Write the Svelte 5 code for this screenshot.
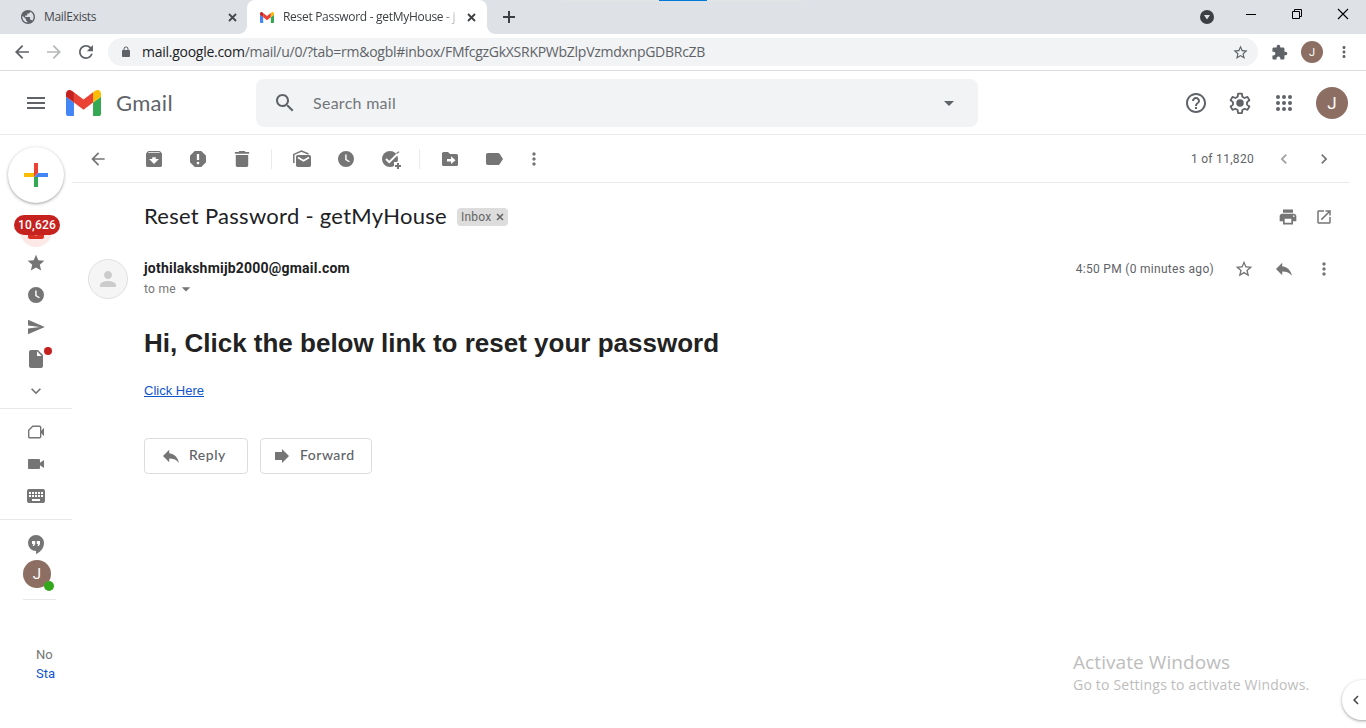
<script>
  const P = {
    back: 'M20 11H7.83l5.59-5.59L12 4l-8 8 8 8 1.41-1.41L7.83 13H20v-2z',
    forward: 'M12 4l-1.41 1.41L16.17 11H4v2h12.17l-5.58 5.59L12 20l8-8z',
    refresh: 'M17.65 6.35C16.2 4.9 14.21 4 12 4c-4.42 0-7.99 3.58-7.99 8s3.57 8 7.99 8c3.73 0 6.84-2.55 7.73-6h-2.08c-.82 2.33-3.04 4-5.65 4-3.31 0-6-2.69-6-6s2.69-6 6-6c1.66 0 3.14.69 4.22 1.78L13 11h7V4l-2.35 2.35z',
    lock: 'M18 8h-1V6c0-2.76-2.24-5-5-5S7 3.24 7 6v2H6c-1.1 0-2 .9-2 2v10c0 1.1.9 2 2 2h12c1.1 0 2-.9 2-2V10c0-1.1-.9-2-2-2zM9 8V6c0-1.66 1.34-3 3-3s3 1.34 3 3v2H9z',
    globe: 'M12 2C6.48 2 2 6.48 2 12s4.48 10 10 10 10-4.48 10-10S17.52 2 12 2zm-1 17.93c-3.95-.49-7-3.85-7-7.93 0-.62.08-1.21.21-1.79L9 15v1c0 1.1.9 2 2 2v1.93zm6.9-2.54c-.26-.81-1-1.39-1.9-1.39h-1v-3c0-.55-.45-1-1-1H8v-2h2c.55 0 1-.45 1-1V7h2c1.1 0 2-.9 2-2v-.41c2.93 1.19 5 4.06 5 7.41 0 2.08-.8 3.97-2.1 5.39z',
    starBorder: 'M22 9.24l-7.19-.62L12 2 9.19 8.63 2 9.24l5.46 4.73L5.82 21 12 17.27 18.18 21l-1.63-7.03L22 9.24zM12 15.4l-3.76 2.27 1-4.28-3.32-2.88 4.38-.38L12 6.1l1.71 4.04 4.38.38-3.32 2.88 1 4.28L12 15.4z',
    star: 'M12 17.27L18.18 21l-1.64-7.03L22 9.24l-7.19-.61L12 2 9.19 8.63 2 9.24l5.46 4.73L5.82 21z',
    puzzle: 'M20.5 11H19V7c0-1.1-.9-2-2-2h-4V3.5C13 2.12 11.88 1 10.5 1S8 2.12 8 3.5V5H4c-1.1 0-1.99.9-1.99 2v3.8H3.5c1.49 0 2.7 1.21 2.7 2.7s-1.21 2.7-2.7 2.7H2V20c0 1.1.9 2 2 2h3.8v-1.5c0-1.49 1.21-2.7 2.7-2.7 1.49 0 2.7 1.21 2.7 2.7V22H17c1.1 0 2-.9 2-2v-4h1.5c1.38 0 2.5-1.12 2.5-2.5S21.88 11 20.5 11z',
    search: 'M15.5 14h-.79l-.28-.27C15.41 12.59 16 11.11 16 9.5 16 5.91 13.09 3 9.5 3S3 5.91 3 9.5 5.91 16 9.5 16c1.61 0 3.09-.59 4.23-1.57l.27.28v.79l5 4.99L20.49 19l-4.99-5zm-6 0C7.01 14 5 11.99 5 9.5S7.01 5 9.5 5 14 7.01 14 9.5 11.99 14 9.5 14z',
    menu: 'M3 18h18v-2H3v2zm0-5h18v-2H3v2zm0-7v2h18V6H3z',
    help: 'M11 18h2v-2h-2v2zm1-16C6.48 2 2 6.48 2 12s4.48 10 10 10 10-4.48 10-10S17.52 2 12 2zm0 18c-4.41 0-8-3.59-8-8s3.59-8 8-8 8 3.59 8 8-3.59 8-8 8zm0-14c-2.21 0-4 1.79-4 4h2c0-1.1.9-2 2-2s2 .9 2 2c0 2-3 1.75-3 5h2c0-2.25 3-2.5 3-5 0-2.21-1.79-4-4-4z',
    archive: 'M20.54 5.23l-1.39-1.68C18.88 3.21 18.47 3 18 3H6c-.47 0-.88.21-1.16.55L3.46 5.23C3.17 5.57 3 6.02 3 6.5V19c0 1.1.9 2 2 2h14c1.1 0 2-.9 2-2V6.5c0-.48-.17-.93-.46-1.27zM12 17.5L6.5 12H10v-2h4v2h3.5L12 17.5zM5.12 5l.81-1h12l.94 1H5.12z',
    report: 'M15.73 3H8.27L3 8.27v7.46L8.27 21h7.46L21 15.73V8.27L15.73 3zM12 17.8c-.8 0-1.5-.6-1.5-1.4 0-.8.7-1.4 1.5-1.4s1.5.6 1.5 1.4c0 .8-.7 1.4-1.5 1.4zM13.3 13h-2.6V6.5h2.6V13z',
    trash: 'M5 19c0 1.1.9 2 2 2h10c1.1 0 2-.9 2-2V7.5H5V19zM20 4h-4l-1-1H9L8 4H4v2.2h16V4z',
    clock: 'M12 2a10 10 0 1 0 0 20a10 10 0 0 0 0-20zM15.8 16.2L11 13.2V6.5h1.8v5.7l4 2.5z',
    send: 'M2.01 21L23 12 2.01 3 2 10l15 2-15 2z',
    reply: 'M10 9V5l-7 7 7 7v-4.1c5 0 8.5 1.6 11 5.1-1-5-4-10-11-11z',
    print: 'M19 8H5c-1.66 0-3 1.34-3 3v6h4v4h12v-4h4v-6c0-1.66-1.34-3-3-3zm-3 11H8v-5h8v5zm3-7c-.55 0-1-.45-1-1s.45-1 1-1 1 .45 1 1-.45 1-1 1zm-1-9H6v4h12V3z',
    open: 'M19 19H5V5h7V3H5c-1.11 0-2 .9-2 2v14c0 1.1.89 2 2 2h14c1.1 0 2-.9 2-2v-7h-2v7zM14 3v2h3.59l-9.83 9.83 1.41 1.41L19 6.41V10h2V3h-7z',
    dots: 'M12 8c1.1 0 2-.9 2-2s-.9-2-2-2-2 .9-2 2 .9 2 2 2zm0 2c-1.1 0-2 .9-2 2s.9 2 2 2 2-.9 2-2-.9-2-2-2zm0 6c-1.1 0-2 .9-2 2s.9 2 2 2 2-.9 2-2-.9-2-2-2z',
    caret: 'M7 10l5 5 5-5z',
    left: 'M15.41 7.41L14 6l-6 6 6 6 1.41-1.41L10.83 12z',
    right: 'M10 6L8.59 7.41 13.17 12l-4.58 4.59L10 18l6-6z',
    down: 'M16.59 8.59L12 13.17 7.41 8.59 6 10l6 6 6-6z',
    person: 'M12 12c2.21 0 4-1.79 4-4s-1.79-4-4-4-4 1.79-4 4 1.79 4 4 4zm0 2c-2.67 0-8 1.34-8 4v2h16v-2c0-2.66-5.33-4-8-4z',
    close: 'M19 6.41L17.59 5 12 10.59 6.410 5 5 6.410 10.590 12 5 17.590 6.410 19 12 13.410 17.590 19 19 17.590 13.410 12z'
  };
  const grid = [2, 8, 14];
</script>

{#snippet icon(name, size = 20, ext = 24)}
  <svg class="i" width={size} height={size} viewBox="{12 - ext / 2} {12 - ext / 2} {ext} {ext}" fill="currentColor"><path d={P[name]} /></svg>
{/snippet}

{#snippet cross(size, weight)}
  <svg class="i" width={size} height={size} viewBox="0 0 {size} {size}"><path d="M1 1L{size - 1} {size - 1}M{size - 1} 1L1 {size - 1}" stroke="currentColor" stroke-width={weight} /></svg>
{/snippet}

{#snippet gmail(w, h)}
  <svg class="i" width={w} height={h} viewBox="52 42 88 66" preserveAspectRatio="none">
    <path fill="#4285f4" d="M58 108h14V74L52 59v43c0 3.320 2.690 6 6 6" />
    <path fill="#34a853" d="M120 108h14c3.320 0 6-2.690 6-6V59l-20 15" />
    <path fill="#fbbc04" d="M120 48v26l20-15v-8c0-7.420-8.470-11.650-14.400-7.200" />
    <path fill="#ea4335" d="M72 74V48l24 18 24-18v26L96 92" />
    <path fill="#c5221f" d="M52 51v8l20 15V48l-5.600-4.200c-5.940-4.450-14.400-.22-14.400 7.200" />
  </svg>
{/snippet}

<div class="page">
  <div class="tabs">
    <div class="tab first">
      <span class="fav"><svg class="i" width="14" height="14" viewBox="2 2 20 20" fill="currentColor"><path d={P.globe} /></svg></span>
      <span class="name n1">MailExists</span>
      <span class="x">{@render cross(9, 1.8)}</span>
    </div>
    <div class="tab active">
      <span class="fav">{@render gmail(14, 11)}</span>
      <span class="name n2">Reset Password - getMyHouse - j</span>
      <span class="x">{@render cross(9, 1.8)}</span>
    </div>
    <div class="plus"><svg class="i" width="12" height="12" viewBox="0 0 12 12"><path d="M6 0v12M0 6h12" stroke="#3c4043" stroke-width="2" /></svg></div>
    <div class="hint"><i></i></div>
    <div class="winctl">
      <svg class="i drop" width="14" height="14" viewBox="0 0 14 14"><circle cx="7" cy="7" r="7" fill="#3c4043" /><path d="M4 5h6L7 9.500z" fill="#dee1e6" /></svg>
      <svg class="i" width="46" height="28" viewBox="0 0 46 28"><path d="M18 14.500h10" stroke="#000" /></svg>
      <svg class="i" width="46" height="28" viewBox="0 0 46 28" fill="none" stroke="#000"><path d="M18.500 11.500h7v7h-7zM20.500 11.500v-2h7v7h-2" /></svg>
      <svg class="i" width="46" height="28" viewBox="0 0 46 28"><path d="M18 9l10 10M28 9L18 19" stroke="#000" stroke-width="1.100" /></svg>
    </div>
  </div>

  <div class="nav">
    <span class="nb">{@render icon('back', 20, 23)}</span>
    <span class="nb dim">{@render icon('forward', 20, 23)}</span>
    <span class="nb">{@render icon('refresh', 20, 23)}</span>
    <div class="omni">
      {@render icon('lock', 12)}
      <span class="url"><b>mail.google.com</b>/mail/u/0/?tab=rm&amp;ogbl#inbox/FMfcgzGkXSRKPWbZlpVzmdxnpGDBRcZB</span>
      {@render icon('starBorder', 17)}
    </div>
    <span class="ext">{@render icon('puzzle', 17)}</span>
    <span class="avatar tiny">J</span>
    <span class="kebab">{@render icon('dots', 18)}</span>
  </div>

  <header>
    <span class="burger">{@render icon('menu', 24)}</span>
    {@render gmail(35, 26)}
    <span class="brand">Gmail</span>
    <div class="search">
      {@render icon('search', 24)}
      <span class="ph">Search mail</span>
      {@render icon('caret', 24)}
    </div>
    <div class="hr">
      <span class="hb">{@render icon('help', 24)}</span>
      <span class="hb"><svg class="i" width="24" height="24" viewBox="-.5 -.5 25 25"><path fill="none" stroke="currentColor" stroke-width="1.900" stroke-linejoin="round" d="M10 2.300h4l.5 3.200 2.300 1.300 3-1.200 2 3.500-2.500 2v2.600l2.500 2-2 3.500-3-1.200-2.300 1.300-.5 3.200h-4l-.5-3.200-2.300-1.300-3 1.200-2-3.500 2.500-2v-2.600l-2.500-2 2-3.500 3 1.200 2.300-1.300z" /><circle cx="12" cy="12" r="3.900" fill="currentColor" /></svg></span>
      <span class="hb"><svg class="i" width="16" height="16" viewBox="0 0 16 16" fill="currentColor">{#each grid as y}{#each grid as x}<circle cx={x} cy={y} r="2" />{/each}{/each}</svg></span>
      <span class="avatar big">J</span>
    </div>
  </header>

  <div class="body">
    <aside>
      <div class="compose"><svg class="i" width="24" height="24" viewBox="0 0 24 24"><path fill="#fbbc04" d="M0 10h10v4H0z" /><path fill="#34a853" d="M10 14h4v10h-4z" /><path fill="#4285f4" d="M14 10h10v4H10z" /><path fill="#ea4335" d="M10 0h4v10l-4 4z" /></svg></div>
      <div class="row inbox">
        <span class="pink"><svg class="i" width="16" height="16" viewBox="0 0 16 16"><path fill="#d93025" d="M2 0h12a2 2 0 0 1 2 2v12a2 2 0 0 1-2 2H2a2 2 0 0 1-2-2V2a2 2 0 0 1 2-2zM2 2v8h3.500a2.500 2.500 0 0 0 5 0H14V2z" /></svg></span>
        <span class="count">10,626</span>
      </div>
      <div class="row">{@render icon('star', 20)}</div>
      <div class="row">{@render icon('clock', 20, 25)}</div>
      <div class="row">{@render icon('send', 20, 25)}</div>
      <div class="row"><svg class="i" width="14" height="18" viewBox="0 0 14 18" fill="currentColor"><path fill-rule="evenodd" d="M2 0h7l5 5v11a2 2 0 0 1-2 2H2a2 2 0 0 1-2-2V2a2 2 0 0 1 2-2zM8 1.300V6h4.700z" /></svg><i class="dot"></i></div>
      <div class="row">{@render icon('down', 20)}</div>
      <hr class="r1" />
      <div class="row"><svg class="i" width="16" height="14" viewBox="0 0 16 14"><path fill="none" stroke="currentColor" stroke-width="1.400" stroke-linejoin="round" d="M4.700 1.200h7a1 1 0 0 1 1 1v9.600a1 1 0 0 1-1 1H1.700a1 1 0 0 1-1-1V5.200z" /><path fill="currentColor" d="M13 6l3-3.200v8.400L13 8z" /></svg></div>
      <div class="row"><svg class="i" width="16" height="10" viewBox="0 0 16 10"><path fill="currentColor" d="M1 0h10a1 1 0 0 1 1 1v2.800L16 1v8l-4-2.800V9a1 1 0 0 1-1 1H1a1 1 0 0 1-1-1V1a1 1 0 0 1 1-1z" /></svg></div>
      <div class="row"><svg class="i" width="18" height="14" viewBox="0 0 18 14"><rect width="18" height="14" rx="2" fill="currentColor" /><path stroke="#fff" stroke-width="2" stroke-dasharray="2 1" d="M2 4h14M2 7h14" /><path stroke="#fff" stroke-width="2" d="M5 11h8" /></svg></div>
      <hr class="r2" />
      <div class="hang"><svg class="i" width="16" height="19" viewBox="0 0 16 19"><path fill="currentColor" d="M8 0a8 8 0 0 1 8 8c0 5-3.500 9-8 11v-3A8 8 0 0 1 8 0z" /><path fill="#fff" d="M4 6h3.200v3.200L5.800 11H4.600l.8-2H4zM8.800 6H12v3.200L10.600 11H9.400l.8-2H8.800z" /></svg></div>
      <div class="me"><span class="avatar mid">J</span><i></i></div>
      <hr class="r3" />
      <p class="no">No</p>
      <p class="sta">Sta</p>
    </aside>

    <main>
      <div class="toolbar">
        <span class="c bk">{@render icon('back', 20)}</span>
        <span class="c">{@render icon('archive', 20, 22.5)}</span>
        <span class="c">{@render icon('report', 20, 22.5)}</span>
        <span class="c">{@render icon('trash', 20, 22.5)}</span>
        <i class="sep"></i>
        <span class="c"><svg class="i" width="18" height="17" viewBox="0 0 18 17"><path fill="none" stroke="currentColor" stroke-width="1.500" d="M.8 13V4.400L8.500 1l7 3" /><rect x="3" y="5" width="15" height="12" rx="1.800" fill="currentColor" /><path d="M5 7.500l5.500 3.300L16 7.500" fill="none" stroke="#fff" stroke-width="1.600" /></svg></span>
        <span class="c">{@render icon('clock', 20, 25)}</span>
        <span class="c"><svg class="i task" width="19" height="18" viewBox="0 0 19 18"><circle cx="8" cy="8" r="8" fill="currentColor" /><path d="M4 8l3.200 3.200L16.500 2" fill="none" stroke="#fff" stroke-width="2" /><path d="M14.500 2.500L17 .8" stroke="currentColor" stroke-width="1.200" /><path d="M12 11h7v7h-7z" fill="#fff" /><path d="M16 12v6M13 15h6" stroke="currentColor" stroke-width="2" /></svg></span>
        <i class="sep"></i>
        <span class="c"><svg class="i" width="16" height="14" viewBox="0 0 16 14"><path fill="currentColor" d="M1.600 0H6l2 2h6.400A1.600 1.600 0 0 1 16 3.600v8.800a1.600 1.600 0 0 1-1.600 1.600H1.600A1.600 1.600 0 0 1 0 12.400V1.600A1.600 1.600 0 0 1 1.600 0z" /><path fill="#fff" d="M5 7h4V4.200L13.500 8.200 9 12V9.400H5z" /></svg></span>
        <span class="c"><svg class="i" width="17" height="12" viewBox="0 0 17 12"><path fill="currentColor" d="M1.800 0h10.400q.9 0 1.400.7L17 6l-3.400 5.300q-.5.7-1.400.7H1.800A1.800 1.800 0 0 1 0 10.200V1.800A1.800 1.800 0 0 1 1.800 0z" /></svg></span>
        <span class="c last">{@render icon('dots', 20)}</span>
        <span class="pager">1 of 11,820</span>
        <span class="pg pale">{@render icon('left', 20)}</span>
        <span class="pg">{@render icon('right', 20)}</span>
      </div>

      <div class="subject">
        <h2>Reset Password - getMyHouse</h2>
        <span class="chip">Inbox {@render cross(8, 1.6)}</span>
        <span class="acts"><span class="a pr">{@render icon('print', 20)}</span><span class="a">{@render icon('open', 18)}</span></span>
      </div>

      <div class="sender">
        <span class="face">{@render icon('person', 24)}</span>
        <div class="who">
          <strong>jothilakshmijb2000@gmail.com</strong>
          <span class="to">to me {@render icon('caret', 20)}</span>
        </div>
        <div class="meta">
          <span class="time">4:50 PM (0 minutes ago)</span>
          <span class="a">{@render icon('starBorder', 20)}</span>
          <span class="a">{@render icon('reply', 20, 22.5)}</span>
          <span class="a">{@render icon('dots', 20)}</span>
        </div>
      </div>

      <div class="mail">
        <h1>Hi, Click the below link to reset your password</h1>
        <span class="link">Click Here</span>
        <div class="btns">
          <span class="btn rep">{@render icon('reply', 20, 22.5)}<em class="t1">Reply</em></span>
          <span class="btn fwd"><svg class="i" width="14" height="14" viewBox="0 0 14 14"><path fill="currentColor" d="M0 3h7V0l7 7-7 7v-3H0z" /></svg><em class="t2">Forward</em></span>
        </div>
      </div>
    </main>
  </div>

  <div class="activate"><p class="w1">Activate Windows</p><p class="w2">Go to Settings to activate Windows.</p></div>
  <div class="panel">{@render icon('left', 18)}</div>
</div>

<style>
  :global(body) { background: #fff; }
  .page { position: relative; width: 1366px; height: 728px; overflow: hidden; background: #fff; font-family: Roboto, sans-serif; color: #5f6368; }
  .page * { box-sizing: border-box; }
  .i { display: block; flex: none; }
  span, em { white-space: nowrap; }
  p, h1, h2 { margin: 0; white-space: nowrap; }

  .tabs { position: relative; display: flex; height: 34px; background: #dee1e6; font: 12px "Open Sans", sans-serif; color: #3c4043; }
  .tab { display: flex; align-items: center; width: 240px; }
  .first { width: 247px; padding-left: 21px; color: #45494d; }
  .fav { display: flex; align-items: center; width: 23px; color: #5f6368; }
  .active { position: relative; padding-left: 13px; background: #fff; border-radius: 8px 8px 0 0; }
  .active::before, .active::after { content: ""; position: absolute; bottom: 0; width: 8px; height: 8px; }
  .active::before { left: -8px; background: radial-gradient(circle at 0 0, #dee1e6 7.500px, #fff 8px); }
  .active::after { right: -8px; background: radial-gradient(circle at 100% 0, #dee1e6 7.500px, #fff 8px); }
  .name { overflow: hidden; line-height: 18px; padding-bottom: 1px; }
  .n1 { width: 184px; letter-spacing: -.3px; }
  .n2 { width: 175px; margin-right: 9px; letter-spacing: -.3px; -webkit-mask-image: linear-gradient(90deg, #000 158px, transparent 178px); mask-image: linear-gradient(90deg, #000 158px, transparent 178px); }
  .plus { display: flex; align-items: center; margin-left: 16px; }
  .hint { display: flex; justify-content: center; width: 240px; height: 1px; margin-left: 48px; background: #e4e4e4; }
  .hint i { width: 48px; background: #0078d7; }
  .winctl { display: flex; margin-left: auto; }
  .drop { margin: 10px 14px 0 0; }

  .nav { display: flex; align-items: center; height: 37px; border-bottom: 1px solid #dadce0; padding-left: 6px; }
  .nb { display: flex; justify-content: center; width: 32px; }
  .dim { opacity: .45; }
  .omni { display: flex; align-items: center; width: 1150px; height: 28px; margin-left: 6px; padding: 0 9px 0 12px; border-radius: 14px; background: #f1f3f4; }
  .url { flex: 1; margin-left: 10px; padding-bottom: 2px; font: 14px "Open Sans", sans-serif; letter-spacing: -.265px; }
  .url b { font-weight: 400; color: #202124; }
  .ext { margin-left: 13px; }
  .avatar { display: flex; align-items: center; justify-content: center; flex: none; border-radius: 50%; background: #8d6e63; color: #fff; }
  .tiny { width: 22px; height: 22px; margin-left: 13px; font-size: 11px; }
  .kebab { margin-left: 12px; }

  header { display: flex; align-items: center; height: 64px; border-bottom: 1px solid #ebebeb; padding-left: 24px; }
  .burger { margin-right: 18px; }
  .brand { width: 140px; margin-left: 15px; font: 22px Lato, sans-serif; letter-spacing: .3px; }
  .search { display: flex; align-items: center; width: 722px; height: 48px; padding: 0 17px; border-radius: 8px; background: #f1f3f4; }
  .ph { flex: 1; margin-left: 16px; font: 16px Lato, sans-serif; letter-spacing: .28px; color: #72767a; }
  .hr { display: flex; align-items: center; margin-left: 196px; }
  .hb { display: flex; justify-content: center; width: 44px; }
  .big { width: 32px; height: 32px; margin-left: 10px; font-size: 17px; }

  .body { display: flex; color: #757575; }
  aside { width: 72px; height: 593px; padding-top: 12px; flex: none; }
  .compose { display: flex; align-items: center; justify-content: center; width: 56px; height: 56px; margin: 0 8px 12px; border-radius: 50%; background: #fff; box-shadow: 0 1px 2px rgba(60,64,67,.3), 0 1px 3px 1px rgba(60,64,67,.15); }
  .row { position: relative; display: flex; align-items: center; justify-content: center; height: 32px; }
  .pink { display: flex; align-items: center; justify-content: center; width: 32px; height: 32px; border-radius: 50%; background: #fce8e6; }
  .count { position: absolute; left: 14px; top: 0; width: 46px; height: 20px; border-radius: 10px; background: #c5221f; color: #fff; font: 500 12px/20px Roboto, sans-serif; letter-spacing: .2px; text-align: center; }
  .dot { position: absolute; left: 44px; top: 4px; width: 8px; height: 8px; border-radius: 50%; background: #c5221f; }
  hr { border: 0; height: 1px; margin: 0; background: #e8e8e8; }
  .r1 { margin: 1px 0 7px; }
  .r2 { margin: 7px 0 15px; }
  .hang { display: flex; justify-content: center; height: 25px; }
  .me { position: relative; width: 28px; margin-left: 23px; }
  .mid { width: 28px; height: 28px; font-size: 15px; }
  .me i { position: absolute; left: 21px; top: 21px; width: 10px; height: 10px; border-radius: 50%; background: #34a81c; }
  .r3 { width: 33px; margin: 11px 0 45px 23px; }
  .no, .sta { margin-left: 36px; font: 13px/19px Roboto, sans-serif; }
  .sta { color: #15c; }

  main { width: 1278px; }
  .toolbar { display: flex; align-items: center; height: 48px; padding-left: 6px; border-bottom: 1px solid #ebebeb; }
  .c { display: flex; justify-content: center; width: 44px; }
  .bk { width: 40px; margin-right: 14px; }
  .sep { width: 1px; height: 20px; margin: 0 8px 0 7px; background: #ebebeb; }
  .task { margin-left: 2px; margin-top: 2px; }
  .last { width: 36px; }
  .pager { margin-left: auto; margin-right: 10px; font-size: 12px; letter-spacing: .3px; color: #5f6368; }
  .pg { display: flex; justify-content: center; width: 40px; }
  .pg:last-child { margin-right: 6px; }
  .pale { opacity: .7; }

  .subject { display: flex; align-items: center; height: 68px; padding: 0 6px 0 72px; }
  h2 { width: 313px; padding-bottom: 3px; font: 22px Lato, sans-serif; letter-spacing: .28px; color: #202124; }
  .chip { display: flex; align-items: center; justify-content: space-between; width: 51px; height: 18px; padding: 0 4px; border-radius: 4px; background: #ddd; font-size: 12px; letter-spacing: .2px; color: #666; }
  .acts { display: flex; margin-left: auto; }
  .a { display: flex; align-items: center; justify-content: center; width: 40px; }
  .pr { width: 32px; }
  .sender { display: flex; height: 60px; padding: 0 6px 0 16px; }
  .face { display: flex; align-items: center; justify-content: center; width: 40px; height: 40px; margin-top: 8px; border: 1px solid #e0e0e0; border-radius: 50%; background: #f5f5f5; color: #ccc; }
  .who { display: flex; flex-direction: column; margin-left: 16px; padding-top: 7px; }
  strong { font: 700 14px/20px Roboto, sans-serif; letter-spacing: .21px; color: #202124; }
  .to { display: flex; align-items: center; margin-top: 1px; font-size: 12px; line-height: 20px; letter-spacing: .3px; }
  .meta { display: flex; align-items: center; height: 36px; margin-left: auto; }
  .time { margin-right: 10px; font-size: 12px; letter-spacing: .3px; color: #5f6368; }

  .mail { padding-left: 72px; font-family: "Liberation Sans", Arial, sans-serif; }
  h1 { margin-top: 17px; font: 700 26px/30px "Liberation Sans", Arial, sans-serif; color: #222; }
  .link { display: block; margin-top: 24px; font-size: 13px; line-height: 17px; color: #15c; text-decoration: underline; }
  .btns { display: flex; gap: 12px; margin-top: 39px; }
  .btn { display: flex; align-items: center; height: 36px; border: 1px solid #dadce0; border-radius: 4px; }
  .rep { width: 104px; padding-left: 16px; }
  .fwd { width: 112px; padding-left: 14px; }
  em { padding-bottom: 3px; font: 500 14px Lato, sans-serif; color: #5f6368; letter-spacing: .5px; }
  .t1 { margin-left: 8px; }
  .t2 { margin-left: 11px; }

  .activate { position: absolute; left: 1073px; top: 650px; color: #bdbdbd; font-family: "Open Sans", sans-serif; }
  .w1 { font-size: 19px; line-height: 24px; letter-spacing: .08px; }
  .w2 { font-size: 14px; line-height: 22px; letter-spacing: .2px; }
  .panel { position: absolute; left: 1342px; top: 680px; display: flex; align-items: center; width: 48px; height: 40px; padding-left: 5px; border-radius: 20px; background: #fff; color: #444; box-shadow: 0 1px 2px rgba(60,64,67,.3), 0 1px 3px 1px rgba(60,64,67,.15); }
</style>
